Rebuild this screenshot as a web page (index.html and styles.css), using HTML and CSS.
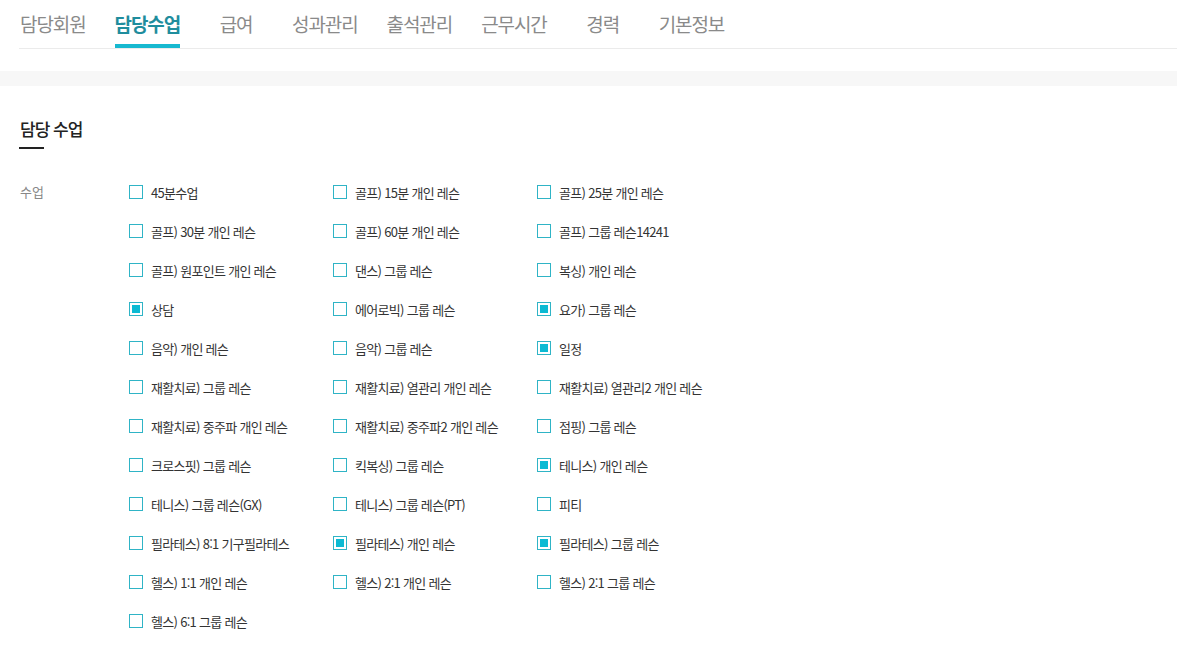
FILE: index.html
```html
<!DOCTYPE html>
<html lang="ko">
<head>
<meta charset="UTF-8" />
<meta name="viewport" content="width=device-width, initial-scale=1" />
<title>담당수업</title>
<link rel="stylesheet" href="styles.css">
</head>
<body>

<nav class="tabs">
  <a class="tab">담당회원</a>
  <a class="tab active">담당수업</a>
  <a class="tab">급여</a>
  <a class="tab">성과관리</a>
  <a class="tab">출석관리</a>
  <a class="tab">근무시간</a>
  <a class="tab">경력</a>
  <a class="tab">기본정보</a>
</nav>

<div class="band"></div>

<section class="panel">
  <h3 class="panel-title">담당 수업</h3>

  <div class="field">
    <div class="field-label">수업</div>
    <div class="check-grid" id="classList"></div>
  </div>
</section>

<script>
  const classes = [
    ['45분수업', false], ['골프) 15분 개인 레슨', false], ['골프) 25분 개인 레슨', false],
    ['골프) 30분 개인 레슨', false], ['골프) 60분 개인 레슨', false], ['골프) 그룹 레슨14241', false],
    ['골프) 원포인트 개인 레슨', false], ['댄스) 그룹 레슨', false], ['복싱) 개인 레슨', false],
    ['상담', true], ['에어로빅) 그룹 레슨', false], ['요가) 그룹 레슨', true],
    ['음악) 개인 레슨', false], ['음악) 그룹 레슨', false], ['일정', true],
    ['재활치료) 그룹 레슨', false], ['재활치료) 열관리 개인 레슨', false], ['재활치료) 열관리2 개인 레슨', false],
    ['재활치료) 중주파 개인 레슨', false], ['재활치료) 중주파2 개인 레슨', false], ['점핑) 그룹 레슨', false],
    ['크로스핏) 그룹 레슨', false], ['킥복싱) 그룹 레슨', false], ['테니스) 개인 레슨', true],
    ['테니스) 그룹 레슨(GX)', false], ['테니스) 그룹 레슨(PT)', false], ['피티', false],
    ['필라테스) 8:1 기구필라테스', false], ['필라테스) 개인 레슨', true], ['필라테스) 그룹 레슨', true],
    ['헬스) 1:1 개인 레슨', false], ['헬스) 2:1 개인 레슨', false], ['헬스) 2:1 그룹 레슨', false],
    ['헬스) 6:1 그룹 레슨', false]
  ];

  const list = document.getElementById('classList');
  classes.forEach(([name, checked]) => {
    const label = document.createElement('label');
    label.className = 'check';
    label.innerHTML = `
      <input type="checkbox" ${checked ? 'checked' : ''} />
      <span class="box"></span>
      <span class="check-text">${name}</span>
    `;
    list.appendChild(label);
  });
</script>

</body>
</html>
```

FILE: styles.css
```css
body {
  margin: 0;
  background: #fff;
  font-family: "Noto Sans CJK KR", "Noto Sans", sans-serif;
  color: #333;
}
.tabs {
  display: flex;
  gap: 29px;
  margin-left: 19px;
  padding-left: 1px;
  height: 48px;
  border-bottom: 1px solid #ebebeb;
}
.tab {
  position: relative;
  min-width: 54px;
  text-align: center;
  font-size: 19px;
  letter-spacing: -1.1px;
  line-height: 48px;
  color: #8a8a8a;
  cursor: pointer;
}
.tab.active {
  font-weight: bold;
  color: #1f8d9d;
}
.tab.active::after {
  content: "";
  position: absolute;
  left: 0;
  right: 0;
  bottom: 0;
  height: 4px;
  background: #17b9d0;
}
.band {
  height: 15px;
  margin-top: 22px;
  background: #f7f7f7;
}
.panel {
  padding: 0 20px;
}
.panel-title {
  display: inline-block;
  margin: 30px 0 0;
  padding-bottom: 8px;
  font-size: 17px;
  font-weight: 500;
  letter-spacing: -1px;
  color: #222;
  position: relative;
}
.panel-title::after {
  content: "";
  position: absolute;
  left: -1px;
  bottom: 0;
  width: 25px;
  height: 2px;
  background: #222;
}
.field {
  display: flex;
  margin-top: 33px;
}
.field-label {
  width: 109px;
  font-size: 13px;
  color: #888;
  line-height: 20px;
}
.check-grid {
  display: grid;
  grid-template-columns: repeat(3, 204px);
  row-gap: 19px;
}
.check {
  display: flex;
  align-items: center;
  height: 20px;
  font-size: 13px;
  color: #333;
  letter-spacing: -0.7px;
  cursor: pointer;
}
.check input {
  display: none;
}
.check .box {
  box-sizing: border-box;
  width: 14px;
  height: 14px;
  border: 1.5px solid #2fb4c6;
  margin-right: 8px;
  padding: 2px;
}
.check input:checked + .box::before {
  content: "";
  display: block;
  width: 100%;
  height: 100%;
  background: #0bbad3;
}
```
